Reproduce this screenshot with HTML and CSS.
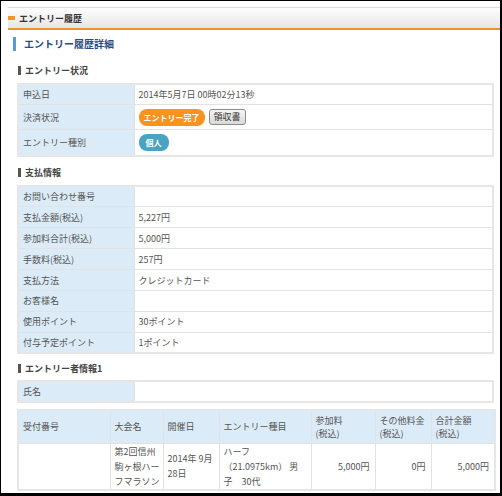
FILE: index.html
```html
<!DOCTYPE html>
<html lang="ja">
<head>
<meta charset="utf-8">
<title>エントリー履歴</title>
<link rel="stylesheet" href="styles.css">
</head>
<body>
<div class="frame">
  <div class="page-head"><span class="mark"></span><span>エントリー履歴</span></div>
  <div class="content">
    <h2 class="title">エントリー履歴詳細</h2>

    <h3 class="sec">エントリー状況</h3>
    <table class="info">
      <tr><th>申込日</th><td>2014年5月7日 00時02分13秒</td></tr>
      <tr class="row-badge"><th>決済状況</th><td><span class="badge badge-orange">エントリー完了</span><span class="receipt">領収書</span></td></tr>
      <tr class="row-badge2"><th>エントリー種別</th><td><span class="badge badge-teal">個人</span></td></tr>
    </table>

    <h3 class="sec">支払情報</h3>
    <table class="info">
      <tr><th>お問い合わせ番号</th><td></td></tr>
      <tr><th>支払金額(税込)</th><td>5,227円</td></tr>
      <tr><th>参加料合計(税込)</th><td>5,000円</td></tr>
      <tr><th>手数料(税込)</th><td>257円</td></tr>
      <tr><th>支払方法</th><td>クレジットカード</td></tr>
      <tr><th>お客様名</th><td></td></tr>
      <tr><th>使用ポイント</th><td>30ポイント</td></tr>
      <tr><th>付与予定ポイント</th><td>1ポイント</td></tr>
    </table>

    <h3 class="sec sec-tight">エントリー者情報1</h3>
    <table class="info">
      <tr><th>氏名</th><td></td></tr>
    </table>

    <table class="list">
      <colgroup>
        <col class="c-no"><col class="c-event"><col class="c-date"><col class="c-kind"><col class="c-fee"><col class="c-other"><col class="c-total">
      </colgroup>
      <thead>
        <tr><th>受付番号</th><th>大会名</th><th>開催日</th><th>エントリー種目</th><th>参加料<br>(税込)</th><th>その他料金<br>(税込)</th><th>合計金額<br>(税込)</th></tr>
      </thead>
      <tbody>
        <tr><td></td><td class="event">第2回信州駒ヶ根ハーフマラソン</td><td>2014年 9月28日</td><td>ハーフ<br>（21.0975km） 男子　30代</td><td class="num">5,000円</td><td class="num">0円</td><td class="num">5,000円</td></tr>
      </tbody>
    </table>
  </div>
</div>
</body>
</html>
```

FILE: styles.css
```css
* { box-sizing: border-box; }
html, body { margin: 0; padding: 0; background: #fff; }
body {
  font-family: "Noto Sans CJK JP", "Noto Sans", sans-serif;
  font-size: 9px;
  color: #555;
}
.frame {
  width: 502px;
  height: 496px;
  border-style: solid;
  border-color: #000;
  border-width: 1px 2px 3px 1px;
  padding: 6px 0 0 7px;
  overflow: hidden;
}
.page-head {
  height: 23px;
  border-top: 1px solid #dcdcdc;
  border-bottom: 2px solid #f39325;
  background: linear-gradient(#fdfdfd, #e6e6e6);
  display: flex;
  align-items: center;
  font-weight: bold;
  color: #333;
}
.mark {
  width: 7px;
  height: 4px;
  background: #f39325;
  margin-right: 4px;
}
.content { padding: 7px 6px 0 5px; }
.title {
  margin: 0;
  height: 14px;
  line-height: 14px;
  border-left: 3px solid #5b9bd5;
  padding-left: 8px;
  font-size: 10px;
  font-weight: bold;
  color: #2b4c7e;
}
.sec {
  margin: 12px 0 6px 5px;
  height: 14px;
  display: flex;
  align-items: center;
  font-size: 9px;
  font-weight: bold;
  color: #444;
}
.sec::before {
  content: "";
  width: 3px;
  height: 9px;
  background: #555;
  margin-right: 4px;
}
.info + .sec { margin-top: 8px; }
.info + .sec-tight { margin-top: 7px; margin-bottom: 5px; }
.info {
  margin-left: 4px;
  width: 477px;
  border-collapse: collapse;
  border: 2px solid #e6e6e6;
}
.info th, .info td {
  border: 1px solid #e2e2e2;
  height: 20.9px;
  padding: 0 4px;
  text-align: left;
  font-weight: normal;
  vertical-align: middle;
}
.info th { width: 116px; background: #dcebf8; }
.info .row-badge td, .info .row-badge th { height: 24.6px; }
.info .row-badge2 td, .info .row-badge2 th { height: 26.6px; }
.badge {
  display: inline-block;
  height: 17px;
  line-height: 17px;
  border-radius: 8px;
  padding: 0 5px;
  color: #fff;
  font-size: 8px;
  font-weight: bold;
  vertical-align: middle;
}
.badge-orange { background: #f7931e; }
.badge-teal { background: #4aa3c0; padding: 0 7px; }
.receipt {
  display: inline-block;
  margin-left: 4px;
  height: 16px;
  line-height: 14px;
  padding: 0 4px;
  border: 1px solid #8c8c8c;
  border-radius: 3px;
  background: linear-gradient(#f6f6f6, #d9d9d9);
  color: #333;
  vertical-align: middle;
}
.list {
  margin: 6px 0 0 4px;
  width: 477px;
  table-layout: fixed;
  border-collapse: collapse;
  border: 2px solid #e6e6e6;
}
.c-no { width: 92px; }
.c-event { width: 53px; }
.c-date { width: 56px; }
.c-kind { width: 92px; }
.c-fee { width: 64px; }
.c-other { width: 56px; }
.c-total { width: 64px; }
.list th, .list td {
  border: 1px solid #e2e2e2;
  padding: 0 4px;
  text-align: left;
  font-weight: normal;
  vertical-align: middle;
}
.list td.event { padding-right: 2px; }
.list th {
  background: #dcebf8;
  height: 33px;
  line-height: 13px;
}
.list td {
  height: 45px;
  line-height: 15px;
}
.list td.num { text-align: right; padding-right: 5px; }
```
